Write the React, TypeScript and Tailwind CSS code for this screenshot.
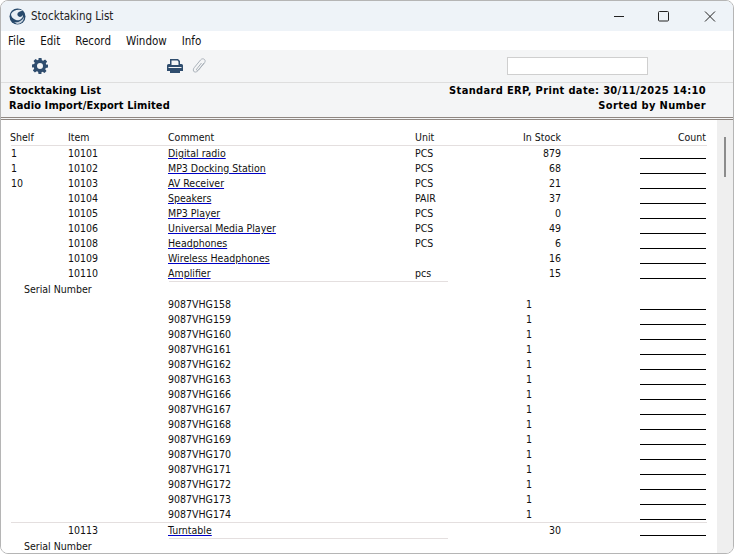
const items = [
  ["1", "10101", "Digital radio", "PCS", "879"],
  ["1", "10102", "MP3 Docking Station", "PCS", "68"],
  ["10", "10103", "AV Receiver", "PCS", "21"],
  ["", "10104", "Speakers", "PAIR", "37"],
  ["", "10105", "MP3 Player", "PCS", "0"],
  ["", "10106", "Universal Media Player", "PCS", "49"],
  ["", "10108", "Headphones", "PCS", "6"],
  ["", "10109", "Wireless Headphones", "", "16"],
  ["", "10110", "Amplifier", "pcs", "15"],
];
const serials = ["158", "159", "160", "161", "162", "163", "166", "167", "168", "169", "170", "171", "172", "173", "174"];

function CountLine() {
  return <div className="ml-auto mr-[11px] h-[13px] w-[66px] border-b border-black" />;
}

function ItemRow({ row }: { row: string[] }) {
  return (
    <div className="flex h-[15px] leading-[14px]">
      <div className="w-[58px] pl-[10px]">{row[0]}</div>
      <div className="w-[109px] pl-[9px]">{row[1]}</div>
      <div className="w-[247px]"><span className="underline decoration-[#0000c8] underline-offset-[1px]">{row[2]}</span></div>
      <div className="w-[50px]">{row[3]}</div>
      <div className="w-[96px] text-right">{row[4]}</div>
      <div className="flex-1"><CountLine /></div>
    </div>
  );
}

export default function App() {
  return (
    <div className="h-[554px] w-[734px] overflow-hidden bg-white text-[#111]" style={{ fontFamily: '"DejaVu Sans", sans-serif' }}>
      <div className="flex h-[554px] flex-col overflow-hidden rounded-[8px] border border-[#b5b5b5] text-[10.5px] [font-stretch:condensed]">
        <div className="flex h-[30px] shrink-0 items-center bg-[#eef3f8] pl-[8px]">
          <svg width="17" height="17" viewBox="0 0 17 17">
            <circle cx="8.5" cy="8.5" r="8" fill="#27496b" />
            <path d="M2 6 C5 1 11 1 14 3 C10 3 8 5 8.5 7 C9 9 12 10 14 7 C14 11 10 13 7 12 C4 11 2 9 2 6Z" fill="#e8eef4" />
            <path d="M5 14 C9 15 13 13 15 9 C15 13 12 16 8 16 Z" fill="#c4d0dc" />
          </svg>
          <span className="ml-[5px] pt-[2px] text-[11.5px] text-[#222]">Stocktaking List</span>
          <div className="ml-auto flex items-center">
            <svg width="46" height="30" viewBox="0 0 46 30"><path d="M19 15.5H29" stroke="#222" strokeWidth="1" /></svg>
            <svg width="46" height="30" viewBox="0 0 46 30"><rect x="17.5" y="10.5" width="10" height="9.5" rx="1" fill="none" stroke="#222" strokeWidth="1" /></svg>
            <svg width="46" height="30" viewBox="0 0 46 30"><path d="M18 10.5L28 20.5M28 10.5L18 20.5" stroke="#222" strokeWidth="1" /></svg>
          </div>
        </div>
        <div className="flex h-[19px] shrink-0 items-center gap-[15px] bg-white pl-[7px] pt-[2px] text-[11.5px] text-[#111]">
          <span>File</span><span>Edit</span><span>Record</span><span>Window</span><span>Info</span>
        </div>
        <div className="flex h-[33px] shrink-0 items-center border-b border-[#dedede] bg-[#f4f5f6]">
          <svg className="ml-[31px]" width="16" height="16" viewBox="0 0 16 16">
            <path fill="#2f4d6e" fillRule="evenodd" d="M6.5 0h3l.4 2.2 1.3.6 1.9-1.3 2 2-1.3 1.9.6 1.3L16 6.5v3l-2.2.4-.6 1.3 1.3 1.9-2 2-1.9-1.3-1.3.6L9.5 16h-3l-.4-2.2-1.3-.6-1.9 1.3-2-2 1.3-1.9-.6-1.3L0 9.5v-3l2.2-.4.6-1.3L1.5 2.9l2-2 1.9 1.3 1.3-.6zM8 5a3 3 0 1 0 0 6 3 3 0 0 0 0-6z" />
          </svg>
          <svg className="ml-[119px]" width="16" height="14" viewBox="0 0 16 14">
            <path fill="#2f4d6e" fillRule="evenodd" d="M3 0h8l2 2v3h1.5A1.5 1.5 0 0 1 16 6.5V12h-3v2H3v-2H0V6.5A1.5 1.5 0 0 1 1.5 5H3zM4.5 1.5V6h7V2.8L10.5 1.5zM1.5 8v1h13V8z" />
          </svg>
          <svg className="ml-[9px]" width="14" height="16" viewBox="0 0 14 16">
            <path d="M12 5L6 12.5C4.5 14.5 2 14.5 1.5 13C1 11.5 1.5 10.5 2.5 9.3L8.5 2C9.8 .5 11.5 .5 12.5 1.5C13.5 2.5 13.3 4 12 5.5L6.5 12C5.5 13 4.3 12.5 4.5 11.3L9.5 5" fill="none" stroke="#aab2ba" strokeWidth="1" />
          </svg>
          <div className="ml-[301px] h-[18px] w-[141px] border border-[#cfcfcf] bg-white" />
        </div>
        <div className="flex h-[34px] shrink-0 justify-between bg-[#f4f5f6] px-[8px] text-[11px] font-bold leading-[15px] text-black">
          <div className="tracking-[0.1px]"><div>Stocktaking List</div><div>Radio Import/Export Limited</div></div>
          <div className="pr-[19px] text-right tracking-[0.35px]"><div>Standard ERP, Print date: 30/11/2025 14:10</div><div>Sorted by Number</div></div>
        </div>
        <div className="h-[3px] shrink-0 border-y border-[#8f8782] bg-[#f4f5f6]" />
        <div className="flex min-h-0 flex-1">
          <div className="min-w-0 flex-1 overflow-hidden bg-white pt-[9px]">
            <div className="flex h-[16px] leading-[16px]">
              <div className="w-[58px] pl-[9px]">Shelf</div>
              <div className="w-[109px] pl-[9px]">Item</div>
              <div className="w-[247px]">Comment</div>
              <div className="w-[50px]">Unit</div>
              <div className="w-[96px] text-right">In Stock</div>
              <div className="flex-1 pr-[11px] text-right">Count</div>
            </div>
            <div className="ml-[10px] h-px w-[696px] bg-[#e4dfdf]" />
            {items.map((r) => <ItemRow key={r[1]} row={r} />)}
            <div className="ml-[168px] h-px w-[279px] bg-[#e4dfdf]" />
            <div className="h-[15px] pl-[23px] leading-[14px]">Serial Number</div>
            {serials.map((s) => (
              <div key={s} className="flex h-[15px] leading-[14px]">
                <div className="w-[167px]" />
                <div className="w-[309px]">9087VHG{s}</div>
                <div className="w-[55px] text-right">1</div>
                <div className="flex-1"><CountLine /></div>
              </div>
            ))}
            <div className="ml-[10px] h-px w-[696px] bg-[#e4dfdf]" />
            <ItemRow row={["", "10113", "Turntable", "", "30"]} />
            <div className="ml-[168px] h-px w-[279px] bg-[#e4dfdf]" />
            <div className="h-[15px] pl-[23px] leading-[14px]">Serial Number</div>
          </div>
          <div className="relative w-[16px] shrink-0 bg-[#efefef]">
            <div className="absolute left-[7px] top-[17px] h-[40px] w-[2px] bg-[#8c8c8c]" />
          </div>
        </div>
      </div>
    </div>
  );
}
